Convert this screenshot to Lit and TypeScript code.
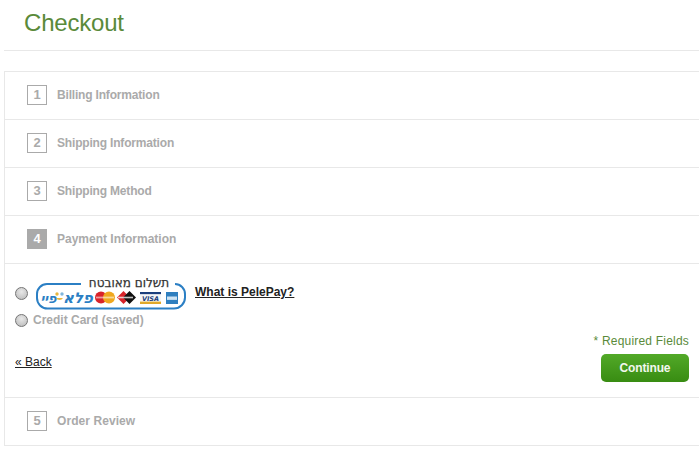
import { LitElement, html, css } from "lit";
import { customElement } from "lit/decorators.js";

@customElement("app-root")
export class AppRoot extends LitElement {
  static styles = css`
    :host { display: block; width: 699px; height: 458px; overflow: hidden; background: #fff; font-family: "Liberation Sans", Arial, sans-serif; font-size: 12px; color: #222; }
    .page { padding-left: 4px; }
    .title { height: 50px; border-bottom: 1px solid #e8e8e8; padding-left: 20px; }
    h1 { margin: 0; font-weight: 400; font-size: 24px; line-height: 46px; letter-spacing: -0.2px; color: #5a8a3a; }
    .box { margin-top: 20px; border: 1px solid #e8e8e8; border-right: 0; }
    .step { display: flex; align-items: center; gap: 10px; padding: 0 0 2px 22px; height: 45px; border-bottom: 1px solid #e8e8e8; font-weight: 700; color: #aaa; letter-spacing: -0.18px; }
    .step.wide { letter-spacing: 0; }
    .step:last-child { border-bottom: 0; letter-spacing: 0.07px; }
    .num { width: 18px; height: 18px; border: 1px solid #aaa; display: flex; align-items: center; justify-content: center; font-size: 13px; color: #aaa; letter-spacing: 0; }
    .num.on { background: #aaa; color: #fff; }
    .body { height: 133px; border-bottom: 1px solid #e8e8e8; display: flex; flex-direction: column; padding: 0 10px; }
    .opt1 { display: flex; align-items: flex-start; height: 46px; }
    .radio { width: 11px; height: 11px; flex: none; border-radius: 50%; border: 1px solid #757575; background: radial-gradient(circle at 50% 35%, #e8e8e8, #b8b8b8); }
    .opt1 .radio { margin-top: 23px; }
    .logo { margin: 8px 0 0 8px; width: 151px; height: 38px; flex: none; }
    .logo text { font-family: "DejaVu Sans", "Liberation Sans", sans-serif; }
    .what { margin: 21px 0 0 8px; font-weight: 700; color: #222; text-decoration: underline; }
    .opt2 { display: flex; align-items: center; gap: 5px; height: 20px; font-weight: 700; color: #aaa; }
    .foot { display: flex; justify-content: space-between; align-items: flex-start; margin-top: 1px; }
    .back { color: #222; text-decoration: underline; margin-top: 24px; line-height: 14px; }
    .right { display: flex; flex-direction: column; align-items: flex-end; }
    .req { color: #5a8a3a; line-height: 14px; margin: 3px 0 6px; letter-spacing: 0.2px; }
    .btn { width: 88px; height: 28px; border: 0; border-radius: 5px; padding: 0; background: linear-gradient(#52a928, #388c12); color: #f2f7ee; font: 700 12px "Liberation Sans", Arial, sans-serif; letter-spacing: -0.15px; }
  `;

  private step(n: number, label: string, on = false) {
    return html`<div class="step ${on ? "wide" : ""}"><span class="num ${on ? "on" : ""}">${n}</span><span>${label}</span></div>`;
  }

  render() {
    return html`<div class="page">
      <div class="title"><h1>Checkout</h1></div>
      <div class="box">
        ${this.step(1, "Billing Information")}
        ${this.step(2, "Shipping Information")}
        ${this.step(3, "Shipping Method")}
        ${this.step(4, "Payment Information", true)}
        <div class="body">
          <div class="opt1">
            <span class="radio"></span>
            <svg class="logo" viewBox="0 0 151 38" aria-label="PelePay">
              <path d="M45 12H11A10 10 0 0 0 1 22v4a10.500 10.500 0 0 0 10.500 10.500H138a11 11 0 0 0 11-11v-3.500A10 10 0 0 0 139 12" fill="none" stroke="#2b7fc4" stroke-width="2"/>
              <text x="93" y="14.500" text-anchor="middle" font-size="12" fill="#333" stroke="#333" stroke-width=".25">תשלום מאובטח</text>
              <text x="42" y="31" text-anchor="middle" font-size="15" font-weight="700" font-style="italic" fill="#2b7fc4">פלא</text>
              <text x="12.500" y="31" text-anchor="middle" font-size="13" font-weight="700" font-style="italic" fill="#2b7fc4">פיי</text>
              <circle cx="21" cy="22" r="1.700" fill="#e8b640"/><circle cx="26" cy="22" r="1.700" fill="#7fb6dd"/><path d="M20 26a4 4 0 0 0 7 0z" fill="#e8b640"/>
              <circle cx="65" cy="25.500" r="6" fill="#d8232a"/><circle cx="73" cy="25.500" r="6" fill="#f0a81e"/><rect x="60" y="24.600" width="18" height="1.800" fill="#fff" opacity=".55"/>
              <path d="M87.500 19l6.500 6.500-6.500 6.500-6.500-6.500z" fill="#d8232a"/><path d="M93.500 19l6.500 6.500-6.500 6.500-6.500-6.500z" fill="#111"/><rect x="82" y="24.700" width="15" height="1.600" fill="#fff" opacity=".75"/>
              <rect x="104" y="20" width="21" height="2.400" fill="#1c3f7c"/><rect x="104" y="22.400" width="21" height="7.200" fill="#f6f6f6"/><rect x="104" y="29.600" width="21" height="2.400" fill="#e0a92a"/>
              <text x="114.500" y="28.500" text-anchor="middle" font-size="6.500" font-weight="700" font-style="italic" fill="#1c3f7c">VISA</text>
              <rect x="130" y="20" width="12" height="12" fill="#2f7fbf"/><rect x="131" y="24.500" width="10" height="3.400" fill="#cfe4f3"/>
            </svg>
            <a class="what">What is PelePay?</a>
          </div>
          <div class="opt2"><span class="radio"></span><span>Credit Card (saved)</span></div>
          <div class="foot">
            <a class="back">« Back</a>
            <div class="right"><span class="req">* Required Fields</span><button class="btn">Continue</button></div>
          </div>
        </div>
        ${this.step(5, "Order Review")}
      </div>
    </div>`;
  }
}
